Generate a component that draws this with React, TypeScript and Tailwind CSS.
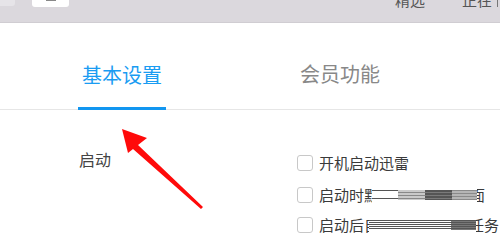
import React from "react";

const font = { fontFamily: '"Noto Sans CJK SC", "Noto Sans", sans-serif' };

const Checkbox = () => (
  <span className="w-4 h-4 rounded-[3px] border border-[#c8c8c8] bg-white shrink-0" />
);

// clipped glyph, shows only part of a character
const Partial = ({ ch, width, shift = 0 }: { ch: string; width: number; shift?: number }) => (
  <span className="inline-block overflow-hidden whitespace-nowrap" style={{ width }}>
    <span className="inline-block" style={{ marginLeft: shift }}>{ch}</span>
  </span>
);

export default function App() {
  return (
    <div className="w-[500px] h-[243px] bg-white overflow-hidden relative" style={font}>
      {/* window top bar */}
      <div className="h-[23px] bg-[#dbd8dd] border-b border-[#d0cdd2] flex items-start">
        <div className="w-[15px] h-[6px] bg-[#e6e4e8] rounded-br-[3px]" />
        <div className="ml-[17px] w-[37px] h-[7px] bg-white rounded-b-[3px] flex justify-center">
          <div className="w-[10px] h-[1px] bg-[#888]" />
        </div>
        <div className="ml-[326px] flex -mt-[8px] text-[15px] leading-[15px] text-[#555] whitespace-nowrap">
          <span className="w-[30px]">精选</span>
          <span className="ml-[37px] w-[30px]">正在</span>
          <span className="ml-[5px] w-[1px] h-[15px] bg-[#777]" />
        </div>
      </div>

      {/* tabs */}
      <div className="h-[87px] border-b border-[#e6e6e6] flex items-end pl-[78px] gap-[130px]">
        <div className="w-[88px] h-full flex flex-col items-center border-b-[3px] border-[#1296f0] -mb-px">
          <span className="mt-[41px] text-[20px] leading-[20px] text-[#1a9cf2]">基本设置</span>
        </div>
        <div className="w-[88px] h-full flex flex-col items-center">
          <span className="mt-[41px] text-[20px] leading-[20px] text-[#888]">会员功能</span>
        </div>
      </div>

      {/* content */}
      <div className="flex pt-[40px]">
        <div className="w-[297px] pl-[79px] text-[16px] leading-[16px] text-[#444] pt-[1px]">启动</div>
        <div className="flex flex-col text-[15px] leading-[16px] text-[#3a3a3a]">
          <div className="flex items-center gap-[6px] mt-[5px]">
            <Checkbox />
            <span>开机启动迅雷</span>
          </div>
          <div className="flex items-center gap-[6px] mt-[16px]">
            <Checkbox />
            <span className="flex items-center">
              启动时<Partial ch="默" width={8} />
              <span className="flex h-[10px] w-[105px]">
                <span className="w-[26px] bg-[repeating-linear-gradient(180deg,#555_0px,#555_1px,#fff_1px,#fff_8px)]" />
                <span className="w-[27px] bg-[repeating-linear-gradient(180deg,#c9c9c9_0px,#c9c9c9_2px,#888_2px,#888_3px)]" />
                <span className="w-[27px] bg-[repeating-linear-gradient(180deg,#555_0px,#555_2px,#7a7a7a_2px,#7a7a7a_3px)]" />
                <span className="w-[25px] bg-[repeating-linear-gradient(180deg,#8a8a8a_0px,#8a8a8a_1px,#b5b5b5_1px,#b5b5b5_3px)]" />
              </span>
              <Partial ch="面" width={8} shift={-7} />
            </span>
          </div>
          <div className="flex items-center gap-[6px] mt-[14px]">
            <Checkbox />
            <span className="flex items-center">
              启动后<Partial ch="自" width={5} />
              <span className="flex h-[10px] w-[107px]">
                <span className="w-[82px] bg-[repeating-linear-gradient(180deg,#555_0px,#555_1px,#fff_1px,#fff_2px)]" />
                <span className="w-[25px] bg-[repeating-linear-gradient(180deg,#555_0px,#555_1px,#777_1px,#777_2px)]" />
              </span>
              <Partial ch="任" width={8} shift={-7} />务
            </span>
          </div>
        </div>
      </div>

      {/* red annotation arrow */}
      <svg className="absolute left-0 top-0" width="500" height="243" viewBox="0 0 500 243">
        <polygon points="122,129 147,138 138,145 203,207 201,209 133,149 128,153" fill="#ff0a0a" />
      </svg>
    </div>
  );
}
